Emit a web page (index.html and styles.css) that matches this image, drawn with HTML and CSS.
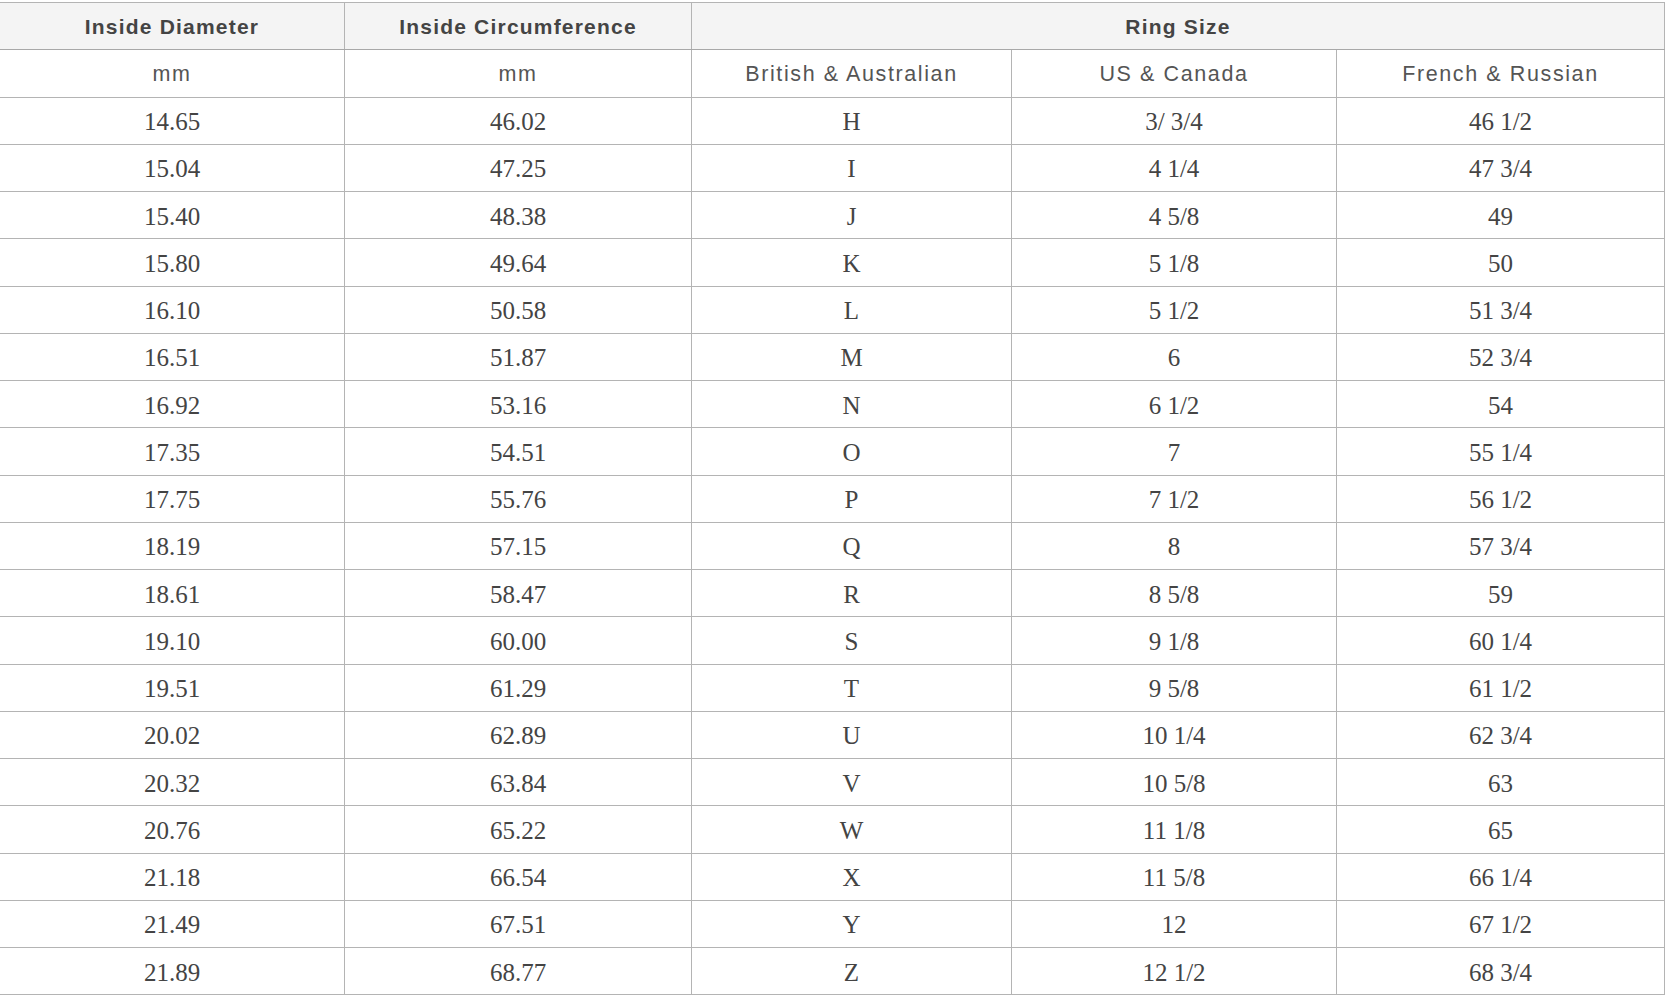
FILE: index.html
```html
<!DOCTYPE html>
<html>
<head>
<meta charset="utf-8">
<link rel="stylesheet" href="styles.css">
</head>
<body>
<div class="wrap">
<table class="sizes">
  <colgroup>
    <col class="c1"><col class="c2"><col class="c3"><col class="c4"><col class="c5">
  </colgroup>
  <thead>
    <tr class="head">
      <th>Inside Diameter</th>
      <th>Inside Circumference</th>
      <th colspan="3">Ring Size</th>
    </tr>
    <tr class="sub">
      <td>mm</td>
      <td>mm</td>
      <td>British &amp; Australian</td>
      <td>US &amp; Canada</td>
      <td>French &amp; Russian</td>
    </tr>
  </thead>
  <tbody>
    <tr><td>14.65</td><td>46.02</td><td>H</td><td>3/ 3/4</td><td>46 1/2</td></tr>
    <tr><td>15.04</td><td>47.25</td><td>I</td><td>4 1/4</td><td>47 3/4</td></tr>
    <tr><td>15.40</td><td>48.38</td><td>J</td><td>4 5/8</td><td>49</td></tr>
    <tr><td>15.80</td><td>49.64</td><td>K</td><td>5 1/8</td><td>50</td></tr>
    <tr><td>16.10</td><td>50.58</td><td>L</td><td>5 1/2</td><td>51 3/4</td></tr>
    <tr><td>16.51</td><td>51.87</td><td>M</td><td>6</td><td>52 3/4</td></tr>
    <tr><td>16.92</td><td>53.16</td><td>N</td><td>6 1/2</td><td>54</td></tr>
    <tr><td>17.35</td><td>54.51</td><td>O</td><td>7</td><td>55 1/4</td></tr>
    <tr><td>17.75</td><td>55.76</td><td>P</td><td>7 1/2</td><td>56 1/2</td></tr>
    <tr><td>18.19</td><td>57.15</td><td>Q</td><td>8</td><td>57 3/4</td></tr>
    <tr><td>18.61</td><td>58.47</td><td>R</td><td>8 5/8</td><td>59</td></tr>
    <tr><td>19.10</td><td>60.00</td><td>S</td><td>9 1/8</td><td>60 1/4</td></tr>
    <tr><td>19.51</td><td>61.29</td><td>T</td><td>9 5/8</td><td>61 1/2</td></tr>
    <tr><td>20.02</td><td>62.89</td><td>U</td><td>10 1/4</td><td>62 3/4</td></tr>
    <tr><td>20.32</td><td>63.84</td><td>V</td><td>10 5/8</td><td>63</td></tr>
    <tr><td>20.76</td><td>65.22</td><td>W</td><td>11 1/8</td><td>65</td></tr>
    <tr><td>21.18</td><td>66.54</td><td>X</td><td>11 5/8</td><td>66 1/4</td></tr>
    <tr><td>21.49</td><td>67.51</td><td>Y</td><td>12</td><td>67 1/2</td></tr>
    <tr><td>21.89</td><td>68.77</td><td>Z</td><td>12 1/2</td><td>68 3/4</td></tr>
  </tbody>
</table>
</div>
</body>
</html>
```

FILE: styles.css
```css
html, body {
  margin: 0;
  padding: 0;
  background: #ffffff;
}

.wrap {
  padding-top: 2px;
  overflow: hidden;
}

.sizes {
  border-collapse: collapse;
  table-layout: fixed;
  width: 1665px;
  margin-left: -1px;
  border-top: 1px solid #9a9a9a;
  border-right: 1px solid #a8a8a8;
  border-bottom: 1px solid #a0a0a0;
}

.c1 { width: 345px; }
.c2 { width: 347px; }
.c3 { width: 320px; }
.c4 { width: 325px; }
.c5 { width: 328px; }

.sizes th,
.sizes td {
  border: 1px solid #b4b4b4;
  height: 47.25px;
  padding: 0;
  text-align: center;
  vertical-align: middle;
  box-sizing: border-box;
}

.sizes tr.head th {
  background: #f4f4f4;
  font-family: "Liberation Sans", Arial, sans-serif;
  font-weight: bold;
  font-size: 21px;
  letter-spacing: 1.2px;
  color: #444444;
  padding-top: 2px;
  border-bottom-color: #a8a8a8;
}

.sizes tr.sub td {
  font-family: "Liberation Sans", Arial, sans-serif;
  font-size: 21.5px;
  letter-spacing: 1.6px;
  color: #555555;
  padding-top: 2px;
}

.sizes tbody td {
  font-family: "Liberation Serif", "Times New Roman", serif;
  font-size: 25px;
  color: #444444;
  padding-top: 3px;
}

.sizes tbody tr td:first-child,
.sizes thead tr td:first-child,
.sizes thead tr th:first-child {
  border-left-color: transparent;
}
```
